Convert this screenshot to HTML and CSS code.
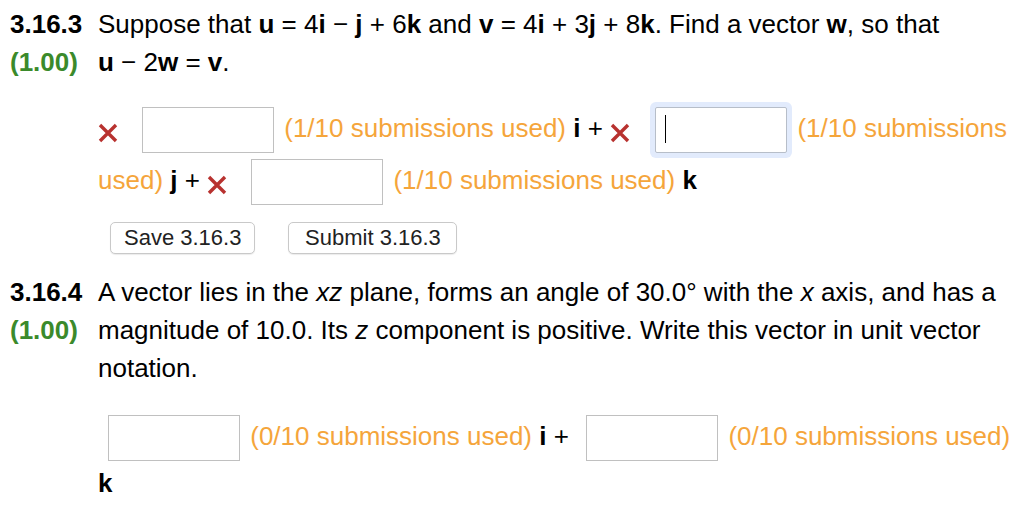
FILE: index.html
```html
<!DOCTYPE html>
<html lang="en">
<head>
<meta charset="utf-8">
<title>Vector questions</title>
<link rel="stylesheet" href="styles.css">
</head>
<body>
<div class="page">
  <section class="question">
    <div class="qnum">
      <div class="qid">3.16.3</div>
      <div class="qpts">(1.00)</div>
    </div>
    <div class="qbody">
      <p class="stmt">Suppose that <b>u</b> = 4<b>i</b> − <b>j</b> + 6<b>k</b> and <b>v</b> = 4<b>i</b> + 3<b>j</b> + 8<b>k</b>. Find a vector <b>w</b>, so that <span class="nowrap"><b>u</b> − 2<b>w</b> = <b>v</b>.</span></p>
      <div class="answers"><svg class="mark" viewBox="0 0 20 20" aria-label="incorrect"><path d="M2 2 L18 18 M18 2 L2 18"/></svg><input class="field" type="text"> <span class="used">(1/10 submissions used)</span> <b>i</b> + <svg class="mark" viewBox="0 0 20 20" aria-label="incorrect"><path d="M2 2 L18 18 M18 2 L2 18"/></svg><span class="focuswrap"><input class="field focused" type="text"><span class="caret"></span></span> <span class="used">(1/10 submissions used)</span> <b>j</b> + <svg class="mark" viewBox="0 0 20 20" aria-label="incorrect"><path d="M2 2 L18 18 M18 2 L2 18"/></svg><input class="field" type="text"> <span class="used">(1/10 submissions used)</span> <b>k</b></div>
      <div class="btns">
        <button class="btn save" type="button">Save 3.16.3</button>
        <button class="btn submit" type="button">Submit 3.16.3</button>
      </div>
    </div>
  </section>

  <section class="question q2">
    <div class="qnum">
      <div class="qid">3.16.4</div>
      <div class="qpts">(1.00)</div>
    </div>
    <div class="qbody">
      <p class="stmt">A vector lies in the <i>xz</i> plane, forms an angle of 30.0° with the <i>x</i> axis, and has a magnitude of 10.0. Its <i>z</i> component is positive. Write this vector in unit vector notation.</p>
      <div class="answers a2"><input class="field nomark" type="text"> <span class="used">(0/10 submissions used)</span> <b>i</b> + <input class="field nomark" type="text"> <span class="used">(0/10 submissions used)</span> <b>k</b></div>
    </div>
  </section>
</div>
</body>
</html>
```

FILE: styles.css
```css
html, body {
  margin: 0;
  padding: 0;
  background: #ffffff;
}

body {
  font-family: "Liberation Sans", Arial, Helvetica, sans-serif;
  font-size: 26px;
  line-height: 38px;
  color: #000000;
}

.page {
  padding: 5px 10px 0 10px;
}

.question {
  display: grid;
  grid-template-columns: 88px 1fr;
}

.q2 {
  margin-top: 19px;
}

.qnum {
  font-weight: bold;
}

.qpts {
  color: #3b8a2b;
}

.stmt {
  margin: 0;
}

.nowrap {
  white-space: nowrap;
}

.answers {
  margin-top: 23px;
}

.a2 {
  margin-top: 25px;
}

.used {
  color: #f5a53b;
}

.mark {
  display: inline-block;
  width: 20px;
  height: 20px;
  vertical-align: -6px;
  margin-right: 24px;
  margin-left: 0;
}

.mark path {
  stroke: #b8322f;
  stroke-width: 3.4;
  fill: none;
}

.field {
  box-sizing: border-box;
  width: 132px;
  height: 46px;
  margin: 3px 3px 3px 0;
  padding: 0 10px;
  border: 1px solid #c0c0c0;
  border-radius: 0;
  background: #ffffff;
  vertical-align: middle;
  font: inherit;
  outline: none;
}

.nomark {
  margin-left: 10px;
}

.focuswrap {
  position: relative;
  display: inline-block;
  vertical-align: middle;
  margin: 3px 3px 3px 1px;
}

.focuswrap .field {
  display: block;
  margin: 0;
}

.focused {
  border-color: #b7bec9;
  border-radius: 2px;
  box-shadow: 0 0 0 5px #e2ebfc;
}

.caret {
  position: absolute;
  left: 10px;
  top: 8px;
  width: 1px;
  height: 28px;
  background: #000000;
}

.btns {
  display: flex;
  gap: 33px;
  margin-top: 14px;
  padding-left: 12px;
}

.btn {
  box-sizing: border-box;
  height: 32px;
  padding: 0 13px;
  border: 1px solid #c9c9c9;
  border-radius: 5px;
  background: #ffffff;
  box-shadow: 0 1px 1px rgba(0, 0, 0, 0.08);
  font-family: "Liberation Sans", Arial, Helvetica, sans-serif;
  font-size: 22px;
  line-height: 30px;
  color: #222222;
}

.submit {
  width: 169px;
}
```
